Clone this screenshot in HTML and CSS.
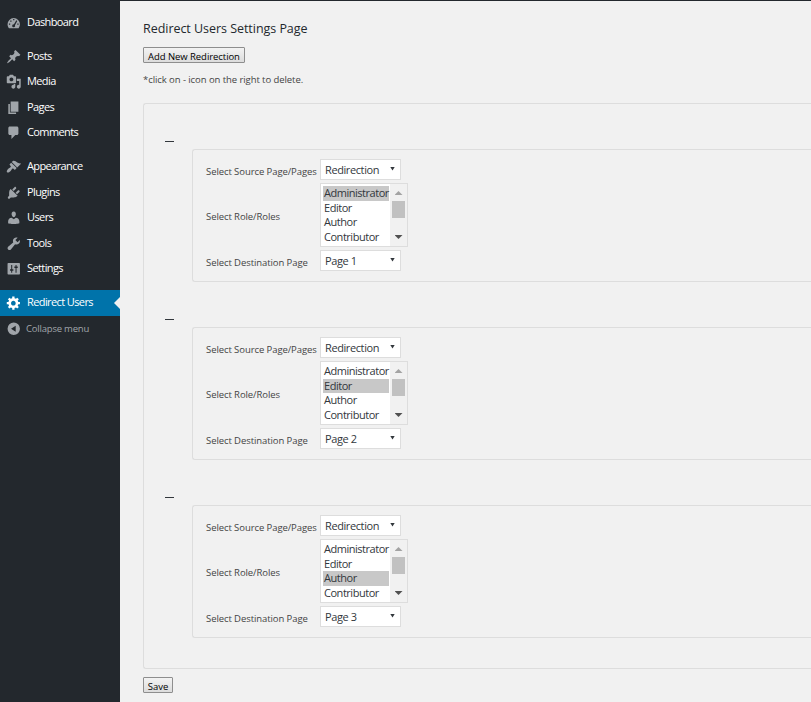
FILE: index.html
```html
<!DOCTYPE html>
<html lang="en">
<head>
<meta charset="utf-8">
<title>Redirect Users Settings Page</title>
<link rel="stylesheet" href="styles.css">
</head>
<body>
<nav class="menu">
  <a class="item"><svg viewBox="0 0 20 20"><path fill-rule="evenodd" d="M3.760 17h12.480A8 8 0 0 0 18 12a8 8 0 0 0-16 0c0 1.900.66 3.640 1.760 5zM9.200 5.200h1.600v1.600H9.200zM5.500 7h1.600v1.600H5.500zM13.300 6.800l1.200.9-2.900 5.500a1.900 1.900 0 1 1-1.500-1.100zM3.800 11h1.600v1.600H3.800zM14.600 11h1.600v1.600h-1.600z"/></svg><span>Dashboard</span></a>
  <div class="gap"></div>
  <a class="item"><svg viewBox="0 0 20 20"><path d="M10.440 3.020l1.820-1.820 6.360 6.350-1.830 1.820c-1.050-.68-2.480-.57-3.410.36l-.75.75c-.92.93-1.040 2.350-.35 3.410l-1.830 1.820-2.410-2.410-2.800 2.790c-.42.42-3.380 2.710-3.800 2.290s1.860-3.390 2.280-3.810l2.790-2.790L4.100 9.360l1.830-1.820c1.050.69 2.480.57 3.400-.36l.75-.75c.93-.92 1.050-2.350.36-3.410z"/></svg><span>Posts</span></a>
  <a class="item"><svg viewBox="0 0 20 20"><path d="M13 11V4c0-.55-.45-1-1-1h-1.670L9 1H5L3.670 3H2c-.55 0-1 .45-1 1v7c0 .55.45 1 1 1h10c.55 0 1-.45 1-1zM7 4.500c1.380 0 2.500 1.120 2.500 2.500S8.380 9.500 7 9.500 4.500 8.380 4.500 7 5.620 4.500 7 4.500zM14 6h5v10.500c0 1.380-1.120 2.500-2.500 2.500S14 17.880 14 16.500s1.120-2.500 2.500-2.500c.17 0 .34.02.5.05V9h-3V6zm-4 8.050V13h2v3.500c0 1.380-1.120 2.500-2.500 2.500S7 17.880 7 16.500 8.120 14 9.500 14c.17 0 .34.02.5.05z"/></svg><span>Media</span></a>
  <a class="item"><svg viewBox="0 0 20 20"><path d="M6 15V2h10v13H6zm-1 1h8v2H3V5h2v11z"/></svg><span>Pages</span></a>
  <a class="item"><svg viewBox="0 0 20 20"><path d="M5 2h9c1.100 0 2 .9 2 2v7c0 1.100-.9 2-2 2h-2l-5 5v-5H5c-1.100 0-2-.9-2-2V4c0-1.100.9-2 2-2z"/></svg><span>Comments</span></a>
  <div class="gap"></div>
  <a class="item"><svg viewBox="0 0 20 20"><path d="M14.480 11.060L7.410 3.990l1.500-1.500c.5-.56 2.300-.47 3.510.32 1.210.8 1.430 1.280 2.910 2.100 1.180.64 2.450 1.260 4.450.85zm-.71.71L6.700 4.700 4.930 6.470c-.39.39-.39 1.020 0 1.410l1.060 1.060c.39.39.39 1.030 0 1.420-.6.6-1.430 1.110-2.210 1.690-.35.26-.7.53-1.010.84C1.430 14.230.4 16.080 1.400 17.070c.99 1 2.840-.03 4.180-1.360.31-.31.58-.66.85-1.020.57-.78 1.080-1.610 1.690-2.210.39-.39 1.020-.39 1.410 0l1.060 1.060c.39.39 1.020.39 1.410 0z"/></svg><span>Appearance</span></a>
  <a class="item"><svg viewBox="0 0 20 20"><path d="M13.110 4.360L9.870 7.600 8 5.730l3.240-3.240c.35-.34 1.050-.2 1.560.32.52.51.66 1.210.31 1.550zm-8 1.770l.91-1.120 9.010 9.010-1.190.84c-.71.71-2.630 1.160-3.820 1.160H6.140L4.900 17.260c-.59.59-1.540.59-2.120 0-.59-.58-.59-1.530 0-2.120l1.240-1.240v-3.880c0-1.130.4-3.190 1.090-3.890zm7.260 3.970l3.240-3.240c.34-.35 1.040-.21 1.550.31.52.51.66 1.210.31 1.550l-3.240 3.250z"/></svg><span>Plugins</span></a>
  <a class="item"><svg viewBox="0 0 20 20"><path d="M10 9.250c-2.270 0-2.730-3.440-2.730-3.440C7 4.020 7.820 2 9.970 2c2.160 0 2.980 2.020 2.710 3.810 0 0-.41 3.440-2.680 3.440zm0 2.570L12.720 10c2.390 0 4.520 2.330 4.520 4.530v2.490s-3.650 1.130-7.240 1.130c-3.650 0-7.240-1.130-7.240-1.130v-2.490c0-2.250 1.940-4.480 4.470-4.480z"/></svg><span>Users</span></a>
  <a class="item"><svg viewBox="0 0 20 20"><path d="M16.680 9.770c-1.340 1.340-3.300 1.670-4.950.99l-5.410 6.520c-.99.99-2.590.99-3.580 0s-.99-2.590 0-3.570l6.520-5.420c-.68-1.650-.35-3.610.99-4.950 1.280-1.280 3.120-1.620 4.720-1.060l-2.890 2.890 2.820 2.820 2.860-2.870c.53 1.580.18 3.390-1.080 4.650z"/></svg><span>Tools</span></a>
  <a class="item"><svg viewBox="0 0 20 20"><path fill-rule="evenodd" d="M3 2.500h14a1 1 0 0 1 1 1v13a1 1 0 0 1-1 1H3a1 1 0 0 1-1-1v-13a1 1 0 0 1 1-1zM6.700 5v5.800H5.200V12.600h1.500v2.400H8v-2.400h1.500v-1.800H8V5zM12.300 5v2.200h-1.500V9h1.500v6h1.300V9h1.500V7.200h-1.500V5z"/></svg><span>Settings</span></a>
  <div class="gap"></div>
  <a class="item current"><svg viewBox="0 0 20 20"><path d="M18 12h-2.180c-.17.7-.44 1.350-.81 1.930l1.540 1.540-2.100 2.100-1.540-1.540c-.58.36-1.230.63-1.910.79V19H8v-2.180c-.68-.16-1.330-.43-1.910-.79l-1.540 1.540-2.120-2.120 1.540-1.540c-.36-.58-.63-1.230-.79-1.910H1V9.030h2.170c.16-.7.44-1.350.8-1.940L2.430 5.550l2.100-2.100 1.540 1.540c.58-.37 1.240-.64 1.930-.81V2h3v2.180c.68.16 1.330.43 1.910.79l1.540-1.540 2.120 2.120-1.540 1.540c.36.59.64 1.240.8 1.940H18V12zm-8.500 1.500c1.660 0 3-1.340 3-3s-1.340-3-3-3-3 1.340-3 3 1.340 3 3 3z"/></svg><span>Redirect Users</span></a>
  <a class="item collapse"><svg viewBox="0 0 20 20"><path fill-rule="evenodd" d="M10 2a8 8 0 1 1 0 16 8 8 0 0 1 0-16zM12.500 6v8L6.500 10z"/></svg><span>Collapse menu</span></a>
</nav>
<main>
  <h1>Redirect Users Settings Page</h1>
  <button class="add"><span>Add New Redirection</span></button>
  <p class="hint">*click on - icon on the right to delete.</p>
  <section class="panel">
    <div class="minus"></div>
    <div class="card">
      <div class="row"><label>Select Source Page/Pages</label><div class="select"><span>Redirection</span><i></i></div></div>
      <div class="row tall"><label>Select Role/Roles</label><div class="list"><ul><li class="on">Administrator</li><li>Editor</li><li>Author</li><li>Contributor</li></ul><div class="bar"><i class="up"></i><b></b><i class="down"></i></div></div></div>
      <div class="row"><label>Select Destination Page</label><div class="select"><span>Page 1</span><i></i></div></div>
    </div>
    <div class="minus"></div>
    <div class="card">
      <div class="row"><label>Select Source Page/Pages</label><div class="select"><span>Redirection</span><i></i></div></div>
      <div class="row tall"><label>Select Role/Roles</label><div class="list"><ul><li>Administrator</li><li class="on">Editor</li><li>Author</li><li>Contributor</li></ul><div class="bar"><i class="up"></i><b></b><i class="down"></i></div></div></div>
      <div class="row"><label>Select Destination Page</label><div class="select"><span>Page 2</span><i></i></div></div>
    </div>
    <div class="minus"></div>
    <div class="card">
      <div class="row"><label>Select Source Page/Pages</label><div class="select"><span>Redirection</span><i></i></div></div>
      <div class="row tall"><label>Select Role/Roles</label><div class="list"><ul><li>Administrator</li><li>Editor</li><li class="on">Author</li><li>Contributor</li></ul><div class="bar"><i class="up"></i><b></b><i class="down"></i></div></div></div>
      <div class="row"><label>Select Destination Page</label><div class="select"><span>Page 3</span><i></i></div></div>
    </div>
  </section>
  <button class="save"><span>Save</span></button>
</main>
</body>
</html>
```
FILE: styles.css
```css
* { box-sizing: border-box; }
body {
  margin: 0;
  height: 702px;
  display: flex;
  overflow: hidden;
  background: #f1f1f1;
  color: #444;
  font-family: "Open Sans", "Noto Sans", sans-serif;
  font-size: 10px;
}
.menu { width: 120px; flex: none; background: #23282d; padding-top: 9.500px; }
.gap { height: 8.500px; }
.item {
  display: flex;
  align-items: center;
  height: 25.500px;
  padding-left: 5.500px;
  color: #fff;
  font-size: 11px;
  letter-spacing: -0.600px;
  white-space: nowrap;
}
.item span { padding-bottom: 2px; }
.item svg { width: 15.500px; height: 15.500px; margin-right: 6px; fill: #a0a5aa; flex: none; }
.current { position: relative; background: #0073aa; }
.current svg { fill: #fff; }
.current::after {
  content: "";
  position: absolute;
  right: 0;
  top: 6.500px;
  border: 6px solid transparent;
  border-left: 0;
  border-right-color: #f1f1f1;
}
.collapse { color: #a0a5aa; font-size: 9.500px; letter-spacing: -0.200px; }
.collapse span { padding-bottom: 0; }
.collapse svg { margin-right: 5px; }

main { flex: 1; min-width: 0; border-top: 1px solid #23282d; padding: 18px 0 0 23px; }
h1 { margin: 0; font-size: 12.500px; line-height: 20px; font-weight: 400; letter-spacing: -0.040px; color: #23282d; white-space: nowrap; }
button {
  display: flex;
  align-items: center;
  justify-content: center;
  height: 16px;
  padding: 2px 0 0;
  border: 1px solid #8e8e8e;
  border-radius: 1px;
  background: linear-gradient(#f3f3f3, #dcdcdc);
  color: #000;
  font: 9.500px "Open Sans", "Noto Sans", sans-serif;
  letter-spacing: -0.060px;
  white-space: nowrap;
}
.add { width: 102px; margin-top: 8px; }
.hint { margin: 10px 0 0; line-height: 14px; font-size: 9.500px; letter-spacing: -0.070px; white-space: nowrap; }
.panel {
  height: 566px;
  margin-top: 16px;
  padding: 37px 0 0 21px;
  border: 1px solid #ddd;
  border-right: 0;
  border-radius: 3px 0 0 3px;
}
.minus { width: 9px; height: 1px; background: #32373c; }
.card {
  height: 133px;
  margin: 7px 0 37px 27px;
  padding: 9px 0 0 13px;
  border: 1px solid #ddd;
  border-right: 0;
  border-radius: 3px 0 0 3px;
}
.row { display: flex; align-items: center; height: 21px; }
.row label { width: 114px; flex: none; white-space: nowrap; font-size: 9.500px; letter-spacing: -0.080px; padding-top: 3px; }
.tall { height: 64px; margin: 3px 0; }
.select {
  display: flex;
  align-items: center;
  justify-content: space-between;
  width: 81px;
  height: 21px;
  padding: 0 5px 0 4px;
  border: 1px solid #ddd;
  background: #fff;
  color: #32373c;
  font-size: 11px;
  letter-spacing: -0.400px;
  white-space: nowrap;
}
.select i { width: 5px; height: 4px; margin-top: -2px; background: #32373c; clip-path: polygon(0 0, 100% 0, 50% 100%); }
.list { display: flex; width: 88px; height: 64px; border: 1px solid #ddd; background: #fff; color: #32373c; }
.list ul { width: 69px; margin: 0; padding: 2px 1px 0 2px; list-style: none; font-size: 11px; line-height: 14.660px; letter-spacing: -0.470px; white-space: nowrap; }
.list li { height: 14.660px; padding-left: 1px; }
.on { background: #c8c8c8; }
.bar { width: 17px; display: flex; flex-direction: column; align-items: center; background: #f1f1f1; }
.bar b { width: 13px; height: 17px; background: #c1c1c1; }
.up { width: 8px; height: 4px; margin: 7px 0 6px; background: #a3a3a3; clip-path: polygon(50% 0, 100% 100%, 0 100%); }
.down { width: 8px; height: 4px; margin-top: 17px; background: #505050; clip-path: polygon(0 0, 100% 0, 50% 100%); }
.save { width: 30px; margin-top: 8px; }
```
